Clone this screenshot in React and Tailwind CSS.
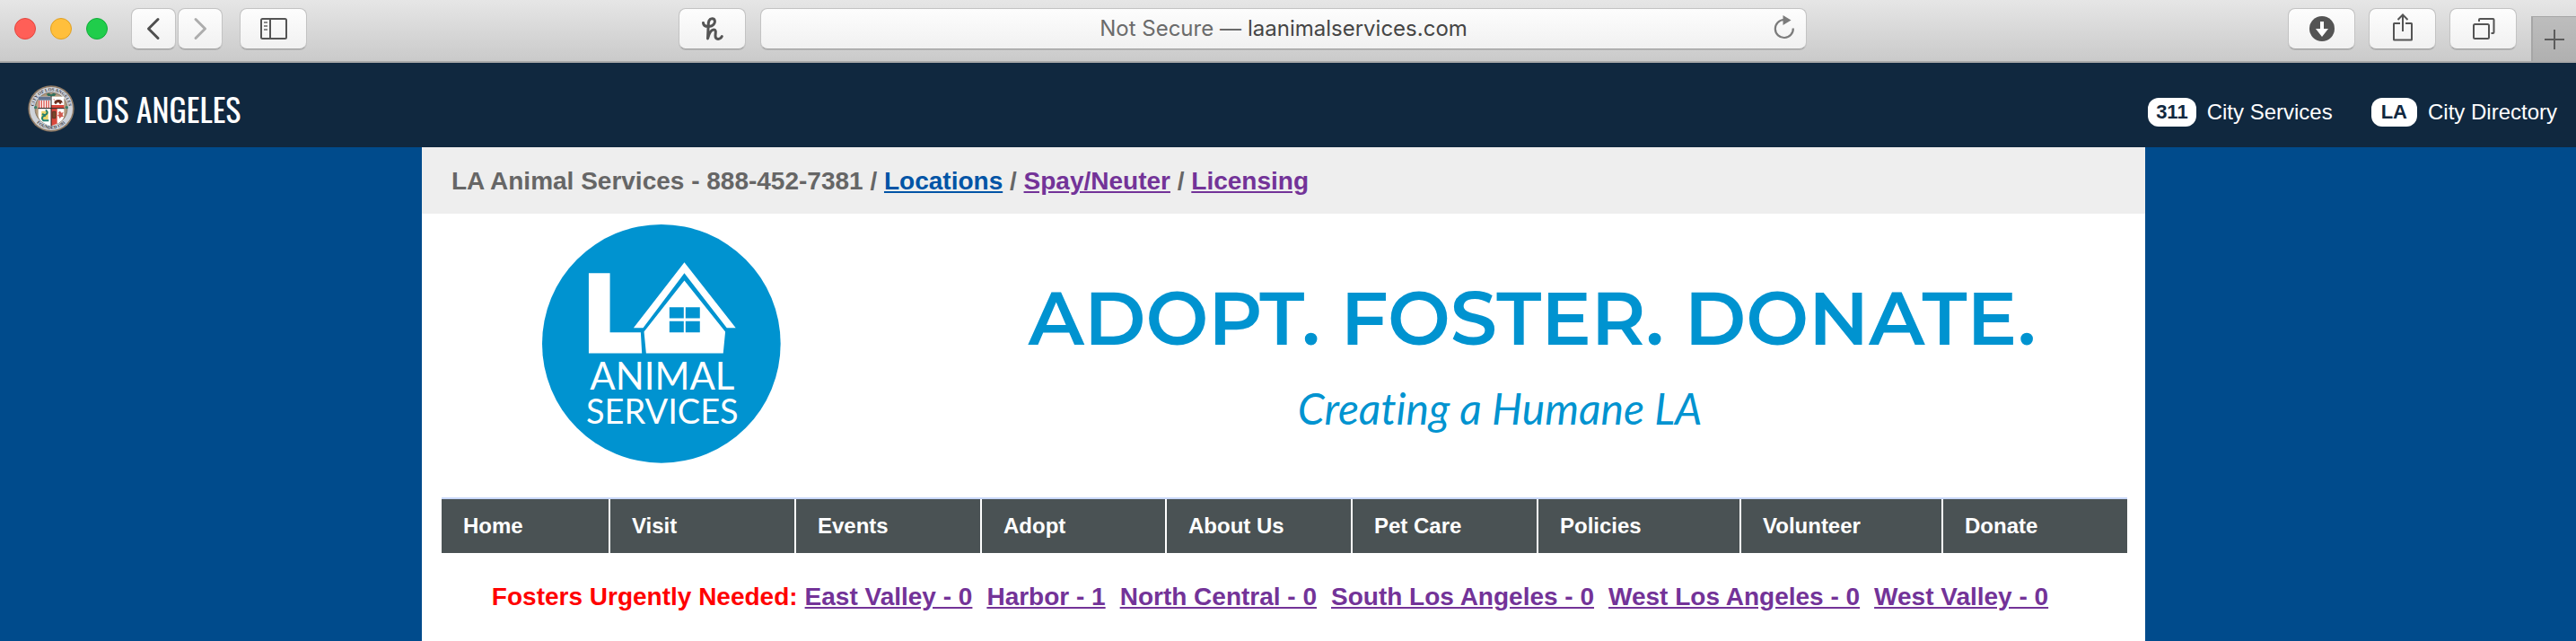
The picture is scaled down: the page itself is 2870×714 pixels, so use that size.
const toolButton =
  "flex h-[46px] items-center justify-center rounded-lg border border-[#c3c3c3] border-b-[#a2a2a2] bg-linear-to-b from-[#fdfdfd] to-[#f1f1f1] shadow-[0_1px_0_rgba(0,0,0,0.1)]";

const navItems = ["Home", "Visit", "Events", "Adopt", "About Us", "Pet Care", "Policies", "Volunteer", "Donate"];

const shelters = [
  "East Valley - 0",
  "Harbor - 1",
  "North Central - 0",
  "South Los Angeles - 0",
  "West Los Angeles - 0",
  "West Valley - 0",
];

function BrowserToolbar() {
  return (
    <div className="grid h-[70px] grid-cols-[756fr_1257fr_857fr] border-b-2 border-[#a9a9a9] bg-linear-to-b from-[#e6e6e6] to-[#cacaca]">
      <div className="flex items-center pb-1 pl-4">
        <div className="flex gap-4">
          <button aria-label="Close" className="size-6 rounded-full border border-[#e2463f] bg-[#ff5f57]" />
          <button aria-label="Minimize" className="size-6 rounded-full border border-[#dfa023] bg-[#ffbf3c]" />
          <button aria-label="Zoom" className="size-6 rounded-full border border-[#12ac3a] bg-[#20cd4b]" />
        </div>
        <div className="ml-[26px] flex gap-0.5">
          <button aria-label="Back" className={`${toolButton} w-[50px]`}>
            <svg width="16" height="26" viewBox="0 0 16 26" fill="none" stroke="#4f4f4f" strokeWidth="3" strokeLinecap="round" strokeLinejoin="round">
              <path d="M13 2.500 L2.500 13 L13 23.500" />
            </svg>
          </button>
          <button aria-label="Forward" className={`${toolButton} w-[50px]`}>
            <svg width="16" height="26" viewBox="0 0 16 26" fill="none" stroke="#adadad" strokeWidth="3" strokeLinecap="round" strokeLinejoin="round">
              <path d="M3 2.500 L13.500 13 L3 23.500" />
            </svg>
          </button>
        </div>
        <button aria-label="Show sidebar" className={`${toolButton} ml-[19px] w-[75px]`}>
          <svg width="30" height="24" viewBox="0 0 30 24" fill="none" stroke="#545454" strokeWidth="2">
            <rect x="1" y="1" width="28" height="22" rx="1.500" />
            <path d="M11 1v22" />
            <path d="M4 5h4M4 9h4M4 13h4" stroke="#8a8a8a" />
          </svg>
        </button>
      </div>

      <div className="flex items-center gap-4 pb-1">
        <button aria-label="Honey" className={`${toolButton} w-[75px]`}>
          <svg width="24" height="26" viewBox="0 0 24 26" fill="none" stroke="#545454" strokeWidth="3" strokeLinecap="round" strokeLinejoin="round">
            <path d="M1.500 6.500 C1.800 9.500 4.500 10.800 8 10.500 C12.500 10 15 7 14.300 4 C13.500 1 9.500 1.200 8 4 C6.800 6.500 7.300 9 7 13 L6.500 24 C8 18 10.500 14 13.500 14 C16.300 14 15 18 15 21 C15 25.500 20.500 25.500 22.300 21.500" />
          </svg>
        </button>
        <div className={`${toolButton} relative flex-1 gap-[7px] text-[24px] leading-8`}>
          <label htmlFor="address" className="font-[Inter,sans-serif] text-[#6b6b6b]">
            Not Secure —
          </label>
          <input
            id="address"
            defaultValue="laanimalservices.com"
            className="field-sizing-content bg-transparent font-[Inter,sans-serif] text-[#454545] outline-none"
          />
          <button aria-label="Reload" className="absolute right-3 top-1.5">
            <svg width="24" height="30" viewBox="0 0 24 30" fill="none" stroke="#7b7b7b" strokeWidth="2.200">
              <path d="M11.500 6 A10 10 0 1 0 21.800 15.500" />
              <path d="M10.500 1 L19.500 6.500 L10.500 12 Z" fill="#7b7b7b" stroke="none" />
            </svg>
          </button>
        </div>
      </div>

      <div className="flex items-center justify-end gap-4">
        <div className="flex gap-[15px] pb-1">
          <button aria-label="Downloads" className={`${toolButton} w-[75px]`}>
            <svg width="28" height="28" viewBox="0 0 28 28">
              <circle cx="14" cy="14" r="14" fill="#545454" />
              <path d="M12 6h4v8h5l-7 9l-7-9h5z" fill="#fff" />
            </svg>
          </button>
          <button aria-label="Share" className={`${toolButton} w-[75px]`}>
            <svg width="24" height="32" viewBox="0 0 24 32" className="-mt-1" fill="none" stroke="#545454" strokeWidth="2">
              <path d="M9 12H2.500Q2 12 2 12.500V30Q2 30.500 2.500 30.500H21.500Q22 30.500 22 30V12.500Q22 12 21.500 12H15" />
              <path d="M12 21V3M6.500 8L12 2.500L17.500 8" />
            </svg>
          </button>
          <button aria-label="Tab overview" className={`${toolButton} w-[75px]`}>
            <svg width="26" height="26" viewBox="0 0 26 26" fill="none" stroke="#545454" strokeWidth="2">
              <rect x="2" y="8" width="17" height="16" rx="1.500" />
              <path d="M8 5V3Q8 2 9 2H23.500Q24.500 2 24.500 3V17Q24.500 18 23.500 18H21.500" />
            </svg>
          </button>
        </div>
        <button aria-label="New tab" className="flex h-[50px] w-[50px] items-center justify-center self-end border-l-2 border-t border-[#a6a6a6] bg-linear-to-b from-[#bdbdbd] to-[#b0b0b0]">
          <svg width="22" height="22" viewBox="0 0 22 22" stroke="#5c5c5c" strokeWidth="2">
            <path d="M11 0v22M0 11h22" />
          </svg>
        </button>
      </div>
    </div>
  );
}

function CitySeal() {
  return (
    <svg width="52" height="52" viewBox="0 0 156 156" role="img" aria-label="Seal of the City of Los Angeles">
      <defs>
        <path id="seal-top" d="M19 78 A59 59 0 0 1 137 78" />
        <path id="seal-bottom" d="M10 78 A68 68 0 0 0 146 78" />
      </defs>
      <circle cx="78" cy="78" r="77" fill="#8f7b66" />
      <circle cx="78" cy="78" r="72" fill="#cfd3da" />
      <circle cx="78" cy="78" r="54" fill="#b19a7e" stroke="#6d5a48" strokeWidth="2" />
      <g fill="#3b3a42" fontFamily="Liberation Serif, serif" fontWeight="700" fontSize="15">
        <text textAnchor="middle">
          <textPath href="#seal-top" startOffset="50%">CITY OF LOS ANGELES</textPath>
        </text>
        <text textAnchor="middle">
          <textPath href="#seal-bottom" startOffset="50%">FOUNDED 1781</textPath>
        </text>
      </g>
      <path d="M62 30l8-4 8 5 8-5 9 4-6 6H68z" fill="#2f6e5c" />
      <circle cx="26" cy="74" r="5" fill="#3c7f6b" />
      <circle cx="130" cy="74" r="5" fill="#3c7f6b" />
      <path d="M35 38H78V76H35z" fill="#fff" />
      <path d="M38 50V76M46 50V76M54 50V76M62 50V76M70 50V76" stroke="#d9534b" strokeWidth="4" />
      <path d="M35 38H76V50H35z" fill="#5f7391" />
      <path d="M78 38H121V76H78z" fill="#fff" />
      <path d="M78 66H121V76H78z" fill="#d9483d" />
      <path d="M88 58c0-8 10-12 20-9c6 1 8 5 8 10l-4-1-1 4h-5l-2-4h-6l-2 4h-5z" fill="#6b2f20" />
      <path d="M85 46l5 1-2 4z" fill="#d9483d" />
      <path d="M35 78H78V136C55 130 35 118 35 100z" fill="#fff" />
      <path d="M46 86h22v28H44z" fill="#ead36a" />
      <path d="M60 82q12 12-4 18q-14 8-4 18h18M48 96l12 6" fill="none" stroke="#23806f" strokeWidth="6" />
      <path d="M78 78H121V100C121 118 101 130 78 136z" fill="#fff" />
      <path d="M78 78H98V128L78 136z" fill="#d9483d" />
      <path d="M83 88h10v22H83z" fill="#7c4a2b" stroke="#3a2a22" strokeWidth="2" />
      <path d="M102 90l6-4 4 6 7-2-3 9 4 6-9 1-4 6-3-8-5-3 5-4z" fill="#d05a50" />
      <path d="M78 36V136M34 77H122" stroke="#1d1d1f" strokeWidth="3" />
    </svg>
  );
}

function CityHeader() {
  return (
    <header className="flex h-[94px] items-start justify-between bg-[#10283f] pl-[31px] pr-[21px] text-white">
      <a href="#los-angeles" className="mt-[25px] flex items-center gap-2.5">
        <CitySeal />
        <span className="font-['Oswald','Liberation_Sans_Narrow',sans-serif] text-[36px] leading-[52px]">LOS ANGELES</span>
      </a>
      <nav aria-label="City" className="mt-[39px] flex gap-[43px] text-[24px] leading-8">
        <a href="#services" className="flex items-center gap-3">
          <span className="rounded-xl bg-white px-[9px] text-[22px] font-bold text-[#10283f]">311</span>
          City Services
        </a>
        <a href="#directory" className="flex items-center gap-3">
          <span className="rounded-xl bg-white px-[11px] text-[22px] font-bold text-[#10283f]">LA</span>
          City Directory
        </a>
      </nav>
    </header>
  );
}

function ShelterLogo() {
  return (
    <svg width="266" height="266" viewBox="72 43 799 799" className="shrink-0" role="img" aria-label="LA Animal Services">
      <circle cx="471" cy="442" r="399" fill="#0093d0" />
      <g fill="#fff">
        <path d="M228 206H299V404H402L406 474H228z" />
        <path d="M548 170L720 389H690L548 206L410 389H378z" />
        <path fillRule="evenodd" d="M548 231L685 402L678 474H420L413 402z M498 320V357H546V320z M552 320V357H600V320z M498 367V404H546V367z M552 367V404H600V367z" />
        <text fontFamily="Lato, sans-serif" textAnchor="middle">
          <tspan x="474" y="596" fontSize="126">ANIMAL</tspan>
          <tspan x="474" y="711" fontSize="114">SERVICES</tspan>
        </text>
      </g>
    </svg>
  );
}

export default function App() {
  return (
    <div className="flex min-h-screen flex-col bg-[#004b8c] font-['Liberation_Sans',Arial,sans-serif]">
      <BrowserToolbar />
      <CityHeader />
      <div className="flex flex-1 pr-2.5">
        <main className="mx-auto w-full max-w-[1920px] bg-white">
          <p className="bg-[#eeeeee] px-[33px] pb-5 pt-[22px] text-[28px] font-bold leading-8 text-[#666666]">
            LA Animal Services - 888-452-7381 /{" "}
            <a href="#locations" className="text-[#0054a6] underline">Locations</a> /{" "}
            <a href="#spay" className="text-[#733398] underline">Spay/Neuter</a> /{" "}
            <a href="#licensing" className="text-[#733398] underline">Licensing</a>
          </p>

          <div className="flex items-start pb-[38px] pl-[134px] pr-[108px] pt-3 text-[#0093d0]">
            <ShelterLogo />
            <div className="flex flex-1 flex-col items-center pl-[262px] pt-[55px]">
              <h1 className="whitespace-nowrap font-['Montserrat','Inter',sans-serif] text-[83px] font-semibold leading-[100px]">
                ADOPT. FOSTER. DONATE.
              </h1>
              <p className="pr-[72px] pt-5 font-[Lato,sans-serif] text-[48px] italic leading-[60px] [font-variant-ligatures:none]">
                Creating a Humane LA
              </p>
            </div>
          </div>

          <nav aria-label="Main" className="ml-[22px] mr-5 border-t-2 border-[#c9d8fb]">
            <ul className="grid grid-cols-[186fr_205fr_205fr_204fr_205fr_205fr_224fr_223fr_205fr] gap-0.5 text-[24px] font-bold leading-[60px] text-white">
              {navItems.map((item) => (
                <li key={item} className="bg-[#4a5254]">
                  <a href={`#${item}`} className="block pl-6">{item}</a>
                </li>
              ))}
            </ul>
          </nav>

          <div className="flex justify-center gap-4 pb-6 pr-[30px] pt-[33px] text-[28px] font-bold leading-8">
            <div className="flex gap-2">
              <span className="text-[#ff0000]">Fosters Urgently Needed:</span>
              <a href="#shelter-0" className="text-[#733398] underline">{shelters[0]}</a>
            </div>
            {shelters.slice(1).map((shelter, i) => (
              <a key={shelter} href={`#shelter-${i + 1}`} className="text-[#733398] underline">{shelter}</a>
            ))}
          </div>
        </main>
      </div>
    </div>
  );
}
